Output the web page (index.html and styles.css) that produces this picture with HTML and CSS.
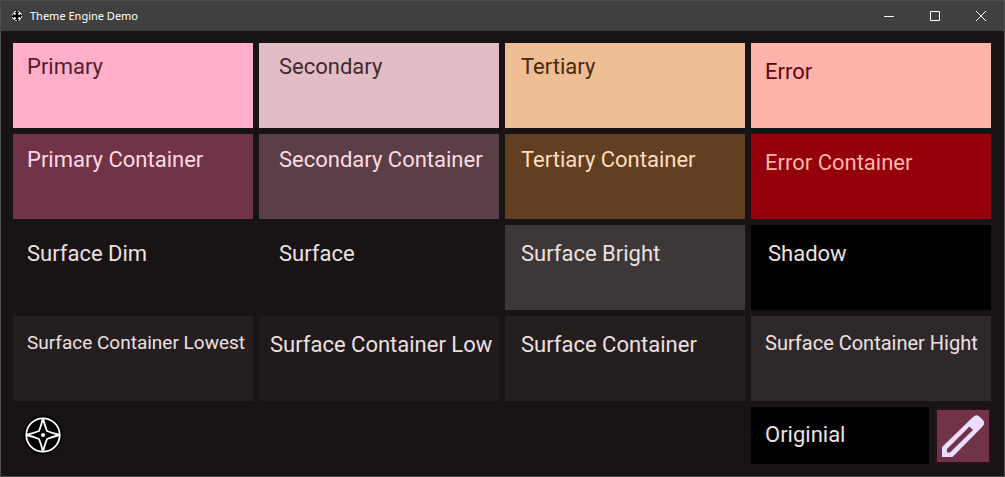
FILE: index.html
```html
<!DOCTYPE html>
<html lang="en">
<head>
<meta charset="utf-8">
<title>Theme Engine Demo</title>
<link rel="stylesheet" href="styles.css">
</head>
<body>
<div class="window">
  <header class="titlebar">
    <svg class="app-icon" viewBox="0 0 12 12" aria-hidden="true">
      <circle cx="6" cy="6" r="5.500" fill="#000"/>
      <circle cx="6" cy="6" r="4.800" fill="none" stroke="#fff" stroke-dasharray="2.200 1.570"/>
      <path d="M2.500 2.500l2 2M9.500 2.500l-2 2M2.500 9.500l2-2M9.500 9.500l-2-2" stroke="#fff" stroke-width="2"/>
    </svg>
    <h1 class="title">Theme Engine Demo</h1>
    <button class="control" aria-label="Minimize"><svg viewBox="0 0 10 10"><path d="M0 5.5h10"/></svg></button>
    <button class="control" aria-label="Maximize"><svg viewBox="0 0 10 10"><path d="M.5.5h9v9h-9z"/></svg></button>
    <button class="control" aria-label="Close"><svg viewBox="0 0 10 10"><path d="M0 0l10 10M10 0L0 10"/></svg></button>
  </header>
  <main class="content">
    <section class="swatches">
      <div class="swatch primary">Primary</div>
      <div class="swatch secondary">Secondary</div>
      <div class="swatch tertiary">Tertiary</div>
      <div class="swatch error">Error</div>
      <div class="swatch primary-container">Primary Container</div>
      <div class="swatch secondary-container">Secondary Container</div>
      <div class="swatch tertiary-container">Tertiary Container</div>
      <div class="swatch error-container">Error Container</div>
      <div class="swatch surface-dim">Surface Dim</div>
      <div class="swatch surface">Surface</div>
      <div class="swatch surface-bright">Surface Bright</div>
      <div class="swatch shadow">Shadow</div>
      <div class="swatch container-lowest">Surface Container Lowest</div>
      <div class="swatch container-low">Surface Container Low</div>
      <div class="swatch container-mid">Surface Container</div>
      <div class="swatch container-high">Surface Container Hight</div>
    </section>
    <footer class="footer">
      <svg class="compass" viewBox="0 0 40 40" aria-hidden="true">
        <circle cx="20" cy="20" r="19.500" fill="#000"/>
        <g fill="none" stroke="#fff" stroke-width="1.800">
          <circle cx="20" cy="20" r="16.700"/>
          <path d="M20 3Q21.500 10 24 16Q30 18.500 37 20Q30 21.500 24 24Q21.500 30 20 37Q18.500 30 16 24Q10 21.500 3 20Q10 18.500 16 16Q18.500 10 20 3z"/>
        </g>
        <circle cx="20" cy="20" r="2" fill="#fff"/>
      </svg>
      <div class="picker">
        <div class="original">Originial</div>
        <button class="edit" aria-label="Edit color">
          <svg viewBox="0 0 52 52" aria-hidden="true">
            <path fill="#eaddff" fill-rule="evenodd" d="M5 47V37L36 7Q39.500 3.500 43 7L45.500 9.500Q49 13 45.500 16.500L15.500 47zM10 42.500H13L36 20L32.500 16.500L10 39z"/>
          </svg>
        </button>
      </div>
    </footer>
  </main>
</div>
</body>
</html>
```
FILE: styles.css
```css
* {
  box-sizing: border-box;
}

body {
  margin: 0;
  background: #181314;
  font-family: Roboto, sans-serif;
}

.window {
  display: flex;
  flex-direction: column;
  min-height: 100vh;
  border: 1px solid #4e4e4e;
  background: #181314;
}

.titlebar {
  display: flex;
  align-items: center;
  height: 30px;
  padding-left: 10px;
  background: #404040;
  color: #fff;
}

.app-icon {
  width: 12px;
  height: 12px;
}

.title {
  flex: 1;
  margin: 0 0 0 7px;
  font: 400 11px/16px "Noto Sans", "Open Sans", sans-serif;
}

.control {
  display: flex;
  align-items: center;
  justify-content: center;
  width: 46px;
  height: 30px;
  padding: 0;
  border: 0;
  background: transparent;
}

.control svg {
  width: 10px;
  height: 10px;
  overflow: visible;
  fill: none;
  stroke: #fff;
}

.content {
  flex: 1;
  padding: 12px 13px 12px 12px;
}

.swatches {
  display: grid;
  grid-template-columns: repeat(4, 1fr);
  gap: 6px;
}

.swatch {
  min-height: 85px;
  padding: 11px 0 0 14px;
  color: #ece0e1;
  font-size: 22px;
  line-height: 26px;
  white-space: nowrap;
}

.swatch:nth-child(4n + 2) {
  padding-left: 20px;
}

.swatch:nth-child(4n + 3) {
  padding-left: 16px;
}

.swatch:nth-child(n + 5) {
  padding-top: 13px;
}

.swatch:nth-child(n + 9) {
  padding-top: 16px;
}

.primary {
  background: #ffb0c8;
  color: #541d32;
}

.secondary {
  background: #e2bdc6;
  color: #422931;
}

.tertiary {
  background: #eebd93;
  color: #472a0b;
}

.error {
  padding-top: 16px;
  background: #ffb4ab;
  color: #690005;
}

.primary-container {
  background: #703348;
  color: #ffd9e2;
}

.secondary-container {
  background: #5a3f47;
  color: #ffd9e2;
}

.tertiary-container {
  background: #613f20;
  color: #ffdcbf;
}

.swatches .error-container {
  padding-top: 16px;
  background: #93000a;
  color: #ffb4ab;
}

.surface-bright {
  background: #3e3738;
}

.shadow {
  padding-left: 17px;
  background: #000;
}

.swatches .container-lowest {
  padding-top: 14px;
  background: #241e1f;
  font-size: 19px;
}

.swatches .container-low {
  padding-left: 11px;
  background: #201a1b;
}

.container-mid {
  background: #241e1f;
}

.swatches .container-high {
  padding-top: 14px;
  background: #2f282a;
  font-size: 20px;
}

.footer {
  display: grid;
  grid-template-columns: repeat(4, 1fr);
  gap: 6px;
  margin-top: 6px;
}

.compass {
  width: 40px;
  height: 40px;
  margin: 8px 0 0 10px;
}

.picker {
  grid-column: 4;
  display: flex;
  gap: 6px;
}

.original {
  flex: 1;
  padding: 15px 14px 16px;
  background: #000;
  color: #ece0e1;
  font-size: 22px;
  line-height: 26px;
}

.edit {
  align-self: center;
  width: 56px;
  height: 56px;
  padding: 0;
  border: 2px solid #26131a;
  background: #703348;
}

.edit svg {
  display: block;
  width: 52px;
  height: 52px;
}
```
